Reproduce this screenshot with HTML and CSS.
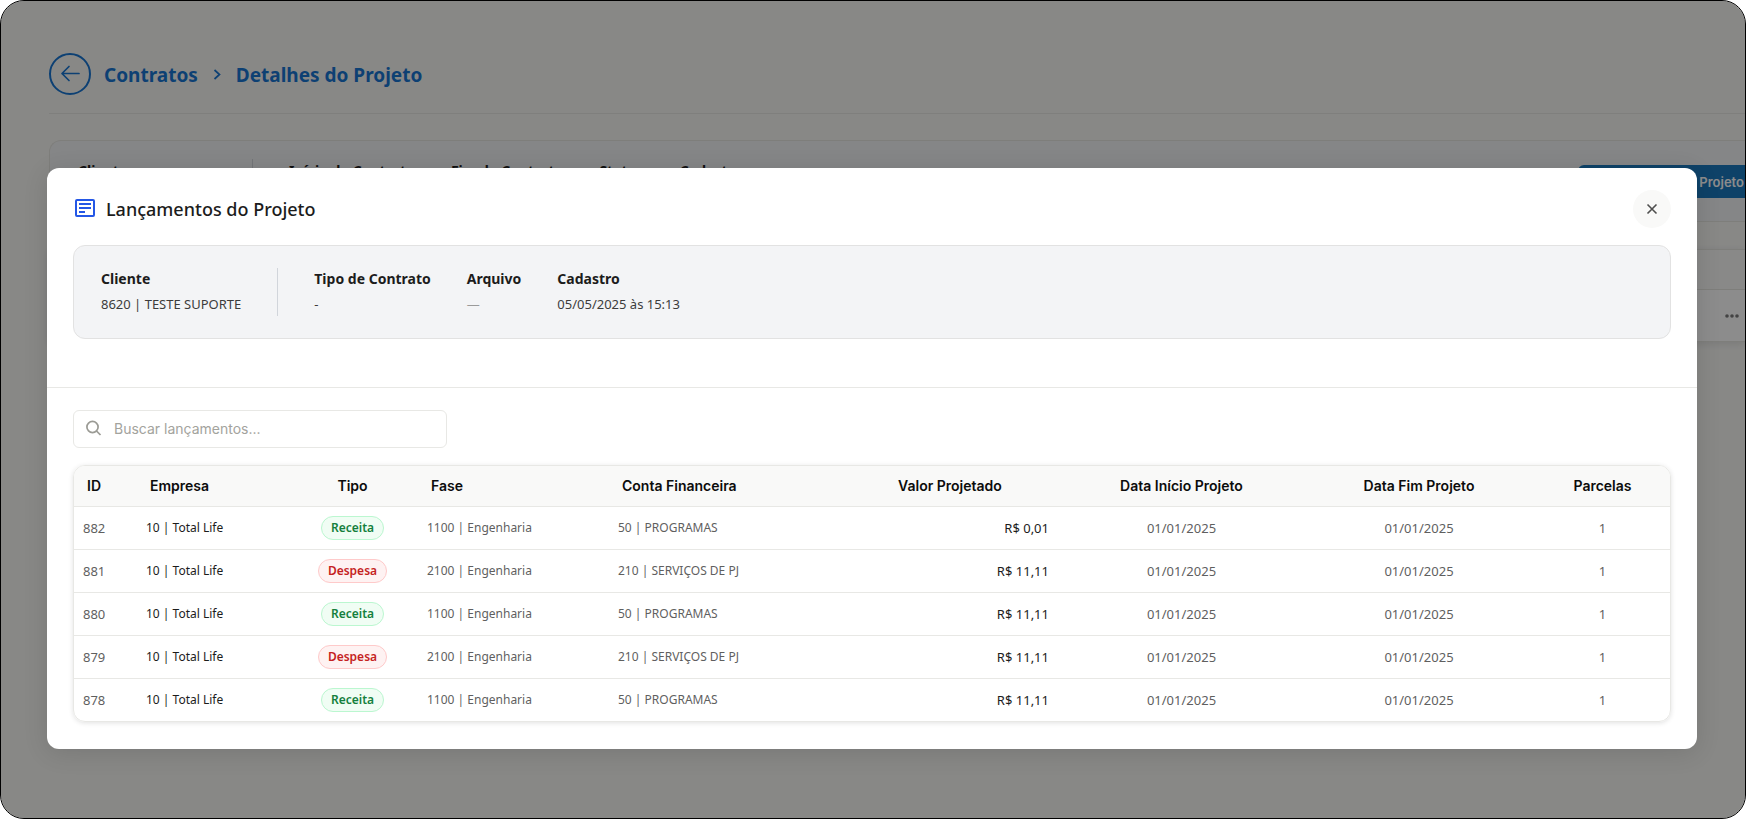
FILE: index.html
```
<!DOCTYPE html>
<html lang="pt-BR">
<head>
<meta charset="utf-8">
<title>Detalhes do Projeto</title>
<link rel="stylesheet" href="styles.css">
</head>
<body>
<div class="frame">
  <div class="page">
    <header class="page-header">
      <button class="back" type="button" aria-label="Voltar">
        <svg width="22" height="22" viewBox="0 0 22 22" fill="none" stroke="currentColor" stroke-width="1.700" stroke-linecap="round" stroke-linejoin="round"><path d="M20 10.500H3M10 3.500L3 10.500L10 17.500"/></svg>
      </button>
      <nav class="crumbs">
        <a href="#">Contratos</a>
        <svg width="8" height="12" viewBox="0 0 8 12" fill="none" stroke="currentColor" stroke-width="1.700"><path d="M1.500 1L6.500 5.500L1.500 10"/></svg>
        <a href="#">Detalhes do Projeto</a>
      </nav>
    </header>
    <section class="contract">
      <dl class="facts">
        <div class="fact fact-client"><dt>Cliente</dt></div>
        <div class="fact"><dt>Início do Contrato</dt></div>
        <div class="fact"><dt>Fim do Contrato</dt></div>
        <div class="fact"><dt>Status</dt></div>
        <div class="fact"><dt>Cadastro</dt></div>
      </dl>
      <button class="primary" type="button">Projeto</button>
    </section>
    <section class="list">
      <div class="list-head"></div>
      <div class="list-row">
        <button class="more" type="button" aria-label="Mais opções">
          <svg width="16" height="6" viewBox="0 0 16 6" fill="currentColor"><circle cx="3" cy="3" r="1.800"/><circle cx="8" cy="3" r="1.800"/><circle cx="13" cy="3" r="1.800"/></svg>
        </button>
      </div>
    </section>
  </div>

  <div class="overlay">
    <div class="modal" role="dialog" aria-labelledby="modal-title">
      <header class="modal-header">
        <svg class="modal-icon" width="22" height="20" viewBox="0 0 22 20" fill="none" stroke="currentColor" stroke-width="2"><rect x="2" y="1" width="18" height="16" rx="1"/><path d="M5 5H17M5 9H17M5 13H11"/></svg>
        <h1 id="modal-title">Lançamentos do Projeto</h1>
        <button class="close" type="button" aria-label="Fechar">
          <svg width="12" height="12" viewBox="0 0 12 12" fill="none" stroke="currentColor" stroke-width="1.600"><path d="M1.500 1.500L10.500 10.500M10.500 1.500L1.500 10.500"/></svg>
        </button>
      </header>
      <section class="summary">
        <dl class="facts">
          <div class="fact fact-divided"><dt>Cliente</dt><dd>8620 | TESTE SUPORTE</dd></div>
          <div class="fact"><dt>Tipo de Contrato</dt><dd>-</dd></div>
          <div class="fact"><dt>Arquivo</dt><dd class="empty">—</dd></div>
          <div class="fact"><dt>Cadastro</dt><dd>05/05/2025 às 15:13</dd></div>
        </dl>
      </section>
      <section class="entries">
        <label class="search">
          <svg width="16" height="18" viewBox="0 0 16 18" fill="none" stroke="currentColor" stroke-width="1.700"><circle cx="6.500" cy="7" r="5.600"/><path d="M10.500 11L14.500 15"/></svg>
          <input type="search" placeholder="Buscar lançamentos..." aria-label="Buscar lançamentos">
        </label>
        <div class="table-card">
          <table>
            <colgroup><col class="c-id"><col class="c-company"><col class="c-type"><col class="c-phase"><col class="c-account"><col class="c-value"><col class="c-start"><col class="c-end"><col class="c-parts"></colgroup>
            <thead>
              <tr><th>ID</th><th>Empresa</th><th class="center">Tipo</th><th>Fase</th><th>Conta Financeira</th><th class="center">Valor Projetado</th><th class="center">Data Início Projeto</th><th class="center">Data Fim Projeto</th><th class="center">Parcelas</th></tr>
            </thead>
            <tbody>
              <tr><td class="num">882</td><td class="strong">10 | Total Life</td><td class="center"><span class="tag tag-in">Receita</span></td><td>1100 | Engenharia</td><td>50 | PROGRAMAS</td><td class="num strong right">R$ 0,01</td><td class="num center">01/01/2025</td><td class="num center">01/01/2025</td><td class="num center">1</td></tr>
              <tr><td class="num">881</td><td class="strong">10 | Total Life</td><td class="center"><span class="tag tag-out">Despesa</span></td><td>2100 | Engenharia</td><td>210 | SERVIÇOS DE PJ</td><td class="num strong right">R$ 11,11</td><td class="num center">01/01/2025</td><td class="num center">01/01/2025</td><td class="num center">1</td></tr>
              <tr><td class="num">880</td><td class="strong">10 | Total Life</td><td class="center"><span class="tag tag-in">Receita</span></td><td>1100 | Engenharia</td><td>50 | PROGRAMAS</td><td class="num strong right">R$ 11,11</td><td class="num center">01/01/2025</td><td class="num center">01/01/2025</td><td class="num center">1</td></tr>
              <tr><td class="num">879</td><td class="strong">10 | Total Life</td><td class="center"><span class="tag tag-out">Despesa</span></td><td>2100 | Engenharia</td><td>210 | SERVIÇOS DE PJ</td><td class="num strong right">R$ 11,11</td><td class="num center">01/01/2025</td><td class="num center">01/01/2025</td><td class="num center">1</td></tr>
              <tr><td class="num">878</td><td class="strong">10 | Total Life</td><td class="center"><span class="tag tag-in">Receita</span></td><td>1100 | Engenharia</td><td>50 | PROGRAMAS</td><td class="num strong right">R$ 11,11</td><td class="num center">01/01/2025</td><td class="num center">01/01/2025</td><td class="num center">1</td></tr>
            </tbody>
          </table>
        </div>
      </section>
    </div>
  </div>
</div>
</body>
</html>
```
FILE: styles.css
```
* {
  box-sizing: border-box;
}

body {
  margin: 0;
  background: #fff;
  color: #1c1c1c;
  font-family: "Noto Sans", "Open Sans", sans-serif;
  font-size: 14px;
  line-height: 20px;
}

h1, dl, dd {
  margin: 0;
}

button {
  padding: 0;
  border: 0;
  font: inherit;
  cursor: pointer;
}

a {
  color: inherit;
  text-decoration: none;
}

svg {
  display: block;
  flex: none;
}

.frame {
  position: relative;
  min-height: 100vh;
  overflow: hidden;
  border: 1px solid #000;
  border-radius: 24px;
  background: #f8f8f5;
}

/* Page behind the dialog */
.page {
  padding: 52px 0 0 48px;
}

.page-header {
  display: flex;
  align-items: center;
  gap: 13px;
  padding-bottom: 18px;
  border-bottom: 1px solid #e8e8e3;
  color: #1976d2;
}

.back {
  display: grid;
  place-items: center;
  width: 42px;
  height: 42px;
  border: 2px solid #1976d2;
  border-radius: 50%;
  background: none;
  color: inherit;
}

.crumbs {
  display: flex;
  align-items: center;
  gap: 15px;
  padding-top: 2px;
  font-size: 19px;
  font-weight: 700;
  line-height: 28px;
}

.contract {
  display: flex;
  justify-content: space-between;
  align-items: flex-start;
  height: 82px;
  margin-top: 26px;
  padding: 18px 0 0 28px;
  border: 1px solid #e5e5e0;
  border-right: 0;
  border-radius: 12px 0 0 0;
  background: #f3f4f6;
}

.facts {
  display: flex;
  gap: 36px;
}

.fact dt {
  font-size: 14px;
  font-weight: 700;
}

.fact dd {
  margin-top: 5px;
  color: #3c3c3c;
  font-size: 13px;
}

.fact dd.empty {
  color: #9a9a9a;
}

.contract .fact {
  padding-top: 2px;
}

.fact-client {
  width: 175px;
  border-right: 1px solid #d1d5db;
}

.primary {
  width: 167px;
  height: 33px;
  margin-top: 6px;
  padding-right: 1px;
  border-radius: 6px 0 0 6px;
  background: #1b78bd;
  color: #fff;
  font-family: Inter, sans-serif;
  font-size: 13px;
  font-weight: 600;
  text-align: right;
}

.list {
  margin-top: 27px;
  border-top: 1px solid #e5e5e0;
  border-bottom: 1px solid #e5e5e0;
  background: #fff;
  box-shadow: 0 2px 8px rgba(0, 0, 0, 0.1);
}

.list-head {
  height: 40px;
  border-bottom: 1px solid #e5e5e0;
  background: #f9f9f8;
}

.list-row {
  display: flex;
  justify-content: flex-end;
  align-items: center;
  height: 51px;
  padding-right: 5px;
}

.more {
  background: none;
  color: #7b7b7b;
}

/* Dialog */
.overlay {
  position: absolute;
  inset: 0;
  padding: 167px 48px 68px 46px;
  background: rgba(0, 0, 0, 0.45);
}

.modal {
  border-radius: 12px;
  background: #fff;
  box-shadow: 0 4px 24px rgba(0, 0, 0, 0.12);
}

.modal-header {
  display: flex;
  align-items: center;
  padding: 22px 26px 0;
}

.modal-icon {
  margin-left: 1px;
  color: #2457e6;
}

.modal-header h1 {
  margin-left: 10px;
  font-size: 18px;
  font-weight: 500;
  line-height: 28px;
}

.close {
  display: grid;
  place-items: center;
  width: 38px;
  height: 38px;
  margin-left: auto;
  border-radius: 50%;
  background: #f9f9f8;
  color: #4f4f4f;
}

.summary {
  margin: 17px 26px 48px;
  padding: 22px 27px;
  border: 1px solid #e2e2e2;
  border-radius: 12px;
  background: #f3f4f6;
}

.summary .fact {
  padding: 1px 0 2px;
}

.summary .fact-divided {
  padding-right: 36px;
  border-right: 1px solid #d1d5db;
}

.entries {
  padding: 22px 26px 27px;
  border-top: 1px solid #e8e8e5;
}

.search {
  display: flex;
  align-items: center;
  gap: 12px;
  width: 374px;
  height: 38px;
  padding: 0 12px;
  border: 1px solid #e8e8e5;
  border-radius: 6px;
  color: #9b9b95;
}

.search input {
  flex: 1;
  min-width: 0;
  padding: 0;
  border: 0;
  outline: 0;
  background: none;
  color: #1c1c1c;
  font-family: Inter, sans-serif;
  font-size: 14px;
  line-height: 20px;
}

.search input::placeholder {
  color: #a3a39d;
}

.table-card {
  margin-top: 17px;
  overflow: hidden;
  border: 1px solid #e8e8e5;
  border-radius: 12px;
  box-shadow: 0 1px 5px rgba(0, 0, 0, 0.12);
}

table {
  width: 100%;
  table-layout: fixed;
  border-collapse: collapse;
}

.c-id { width: 63px; }
.c-company { width: 150px; }
.c-type { width: 131px; }
.c-phase { width: 191px; }
.c-account { width: 233px; }
.c-value { width: 216px; }
.c-start { width: 247px; }
.c-end { width: 228px; }
.c-parts { width: 139px; }

th {
  height: 40px;
  padding: 0 13px;
  background: #f9f9f8;
  color: #0c0c0c;
  font-family: Inter, sans-serif;
  font-size: 14px;
  font-weight: 600;
  text-align: left;
}

td {
  height: 43px;
  padding: 0 9px;
  border-top: 1px solid #e8e8e5;
  color: #5f5f5f;
  font-size: 12px;
}

.num {
  font-size: 13px;
}

.strong {
  color: #1c1c1c;
}

.center {
  text-align: center;
}

.right {
  text-align: right;
}

.tag {
  display: inline-block;
  padding: 1px 9px;
  border: 1px solid;
  border-radius: 12px;
  font-size: 12px;
  font-weight: 600;
}

.tag-in {
  border-color: #bbf7d0;
  background: #f0fdf4;
  color: #15803d;
}

.tag-out {
  border-color: #fecaca;
  background: #fef2f2;
  color: #c52222;
}
```
